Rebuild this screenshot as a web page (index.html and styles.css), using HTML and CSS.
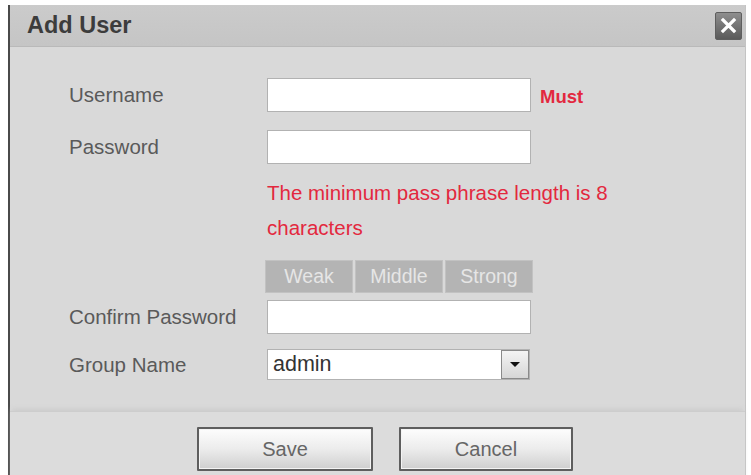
FILE: index.html
```html
<!DOCTYPE html>
<html>
<head>
<meta charset="utf-8">
<link rel="stylesheet" href="styles.css">
</head>
<body>
<div class="dialog">
  <div class="header">
    <span class="title">Add User</span>
    <span class="close">
      <svg width="17" height="17" viewBox="0 0 17 17"><path d="M3 3 L14 14 M14 3 L3 14" stroke="#fff" stroke-width="3.2" stroke-linecap="square"/></svg>
    </span>
  </div>
  <div class="form">
    <div class="row">
      <span class="label">Username</span>
      <span class="input"></span>
      <span class="must">Must</span>
    </div>
    <div class="row row-pw">
      <span class="label">Password</span>
      <span class="input"></span>
    </div>
    <div class="hint">The minimum pass phrase length is 8<br>characters</div>
    <div class="strength">
      <span class="seg">Weak</span>
      <span class="seg">Middle</span>
      <span class="seg">Strong</span>
    </div>
    <div class="row row-confirm">
      <span class="label">Confirm Password</span>
      <span class="input"></span>
    </div>
    <div class="row row-group">
      <span class="label">Group Name</span>
      <span class="select">
        <span class="select-value">admin</span>
        <span class="select-btn"><span class="tri"></span></span>
      </span>
    </div>
  </div>
  <div class="footer">
    <button class="btn btn-save">Save</button>
    <button class="btn btn-cancel">Cancel</button>
  </div>
</div>
</body>
</html>
```
FILE: styles.css
```css
html, body {
  margin: 0;
  padding: 0;
  background: #ffffff;
  font-family: "Liberation Sans", Arial, sans-serif;
}
body {
  height: 475px;
  overflow: hidden;
}
.dialog {
  margin: 5px 0 0 8px;
  width: 738px;
  height: 480px;
  box-sizing: border-box;
  border-left: 2px solid #4a4a4a;
  border-right: 1px solid #c4c4c4;
  background: #d9d9d9;
}
.header {
  height: 41px;
  border-bottom: 1px solid #b9b9b9;
  background: linear-gradient(#cbcbcb, #c5c5c5);
  display: flex;
  align-items: center;
  justify-content: space-between;
  padding: 0 3px 0 17px;
}
.title {
  font-size: 23.5px;
  font-weight: bold;
  color: #3c3c3c;
}
.close {
  width: 27px;
  height: 28px;
  box-sizing: border-box;
  border: 1px solid #5e5e5e;
  border-radius: 2px;
  background: linear-gradient(#8e8e8e, #5a5a5a);
  display: flex;
  align-items: center;
  justify-content: center;
}
.form {
  padding-top: 31px;
  height: 333px;
}
.row {
  display: flex;
  align-items: center;
}
.label {
  width: 257px;
  box-sizing: border-box;
  padding-left: 59px;
  font-size: 20.5px;
  color: #5a5a5a;
}
.input {
  width: 264px;
  height: 34px;
  box-sizing: border-box;
  border: 1px solid #b2b2b2;
  background: #ffffff;
}
.must {
  margin-left: 9px;
  margin-top: 3px;
  font-size: 18.5px;
  font-weight: bold;
  color: #e3283e;
}
.row-pw {
  margin-top: 18px;
}
.hint {
  margin: 11px 0 0 257px;
  font-size: 20.5px;
  line-height: 35px;
  color: #e3283e;
}
.strength {
  margin: 15px 0 0 255px;
  display: flex;
  gap: 2px;
}
.seg {
  width: 88px;
  height: 33px;
  box-sizing: border-box;
  background: #b4b4b4;
  border: 1px solid #c2c2c2;
  color: #e6e6e6;
  font-size: 19.5px;
  display: flex;
  align-items: center;
  justify-content: center;
}
.row-confirm {
  margin-top: 7px;
}
.row-group {
  margin-top: 15px;
}
.select {
  width: 263px;
  height: 31px;
  box-sizing: border-box;
  border: 1px solid #b2b2b2;
  background: #ffffff;
  display: flex;
  align-items: center;
  justify-content: space-between;
}
.select-value {
  padding-left: 5px;
  font-size: 21.5px;
  color: #333333;
}
.select-btn {
  width: 28px;
  height: 29px;
  box-sizing: border-box;
  border: 1px solid #8a8a8a;
  background: linear-gradient(#f4f4f4, #d6d6d6);
  display: flex;
  align-items: center;
  justify-content: center;
}
.tri {
  width: 0;
  height: 0;
  border-left: 5px solid transparent;
  border-right: 5px solid transparent;
  border-top: 5px solid #111111;
}
.footer {
  border-top: 1px solid #cdcdcd;
  box-shadow: 0 -4px 5px -2px #cccccc;
  background: #dcdcdc;
  padding: 15px 0 0 187px;
  height: 70px;
  display: flex;
  align-items: flex-start;
}
.btn {
  height: 44px;
  box-sizing: border-box;
  border: 2px solid #5e5e5e;
  border-radius: 1px;
  background: linear-gradient(#fdfdfd, #ececec 50%, #cfcfcf);
  box-shadow: inset 0 0 0 1px #f4f4f4;
  font-family: "Liberation Sans", Arial, sans-serif;
  font-size: 20px;
  color: #666666;
  padding: 0;
}
.btn-save {
  width: 176px;
}
.btn-cancel {
  width: 174px;
  margin-left: 26px;
}
```
